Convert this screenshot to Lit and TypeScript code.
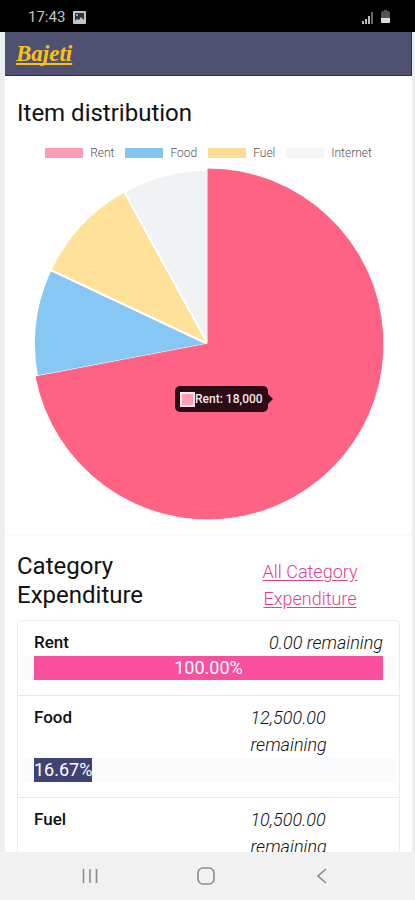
import { LitElement, html, css, svg, nothing } from "lit";
import { customElement } from "lit/decorators.js";

interface Slice {
  label: string;
  value: number;
  fill: string;
  swatch: string;
  active?: boolean;
}

interface Category {
  name: string;
  remaining: string;
  percent?: number;
  full?: boolean;
}

const SLICES: Slice[] = [
  { label: "Rent", value: 18000, fill: "#ff6384", swatch: "#fb9db5", active: true },
  { label: "Food", value: 2500, fill: "#86c7f3", swatch: "#86c5ef" },
  { label: "Fuel", value: 2500, fill: "#ffe19a", swatch: "#fddd96" },
  { label: "Internet", value: 2000, fill: "#f0f2f3", swatch: "#f3f5f6" },
];

const CATEGORIES: Category[] = [
  { name: "Rent", remaining: "0.00", percent: 100, full: true },
  { name: "Food", remaining: "12,500.00", percent: 16.67 },
  { name: "Fuel", remaining: "10,500.00" },
];

@customElement("distribution-pie")
class DistributionPie extends LitElement {
  static styles = css`
    :host { display: block; }
    .legend {
      display: flex;
      justify-content: center;
      gap: 11px;
      margin: 0;
      padding: 0;
      list-style: none;
      font-size: 12px;
      line-height: 16px;
      font-weight: 300;
      color: #555;
    }
    .key { display: flex; align-items: center; gap: 7px; }
    .swatch { width: 38px; height: 10px; }
    .chart { position: relative; margin-top: 7px; }
    .pie { display: block; width: 100%; }
    .tip {
      position: absolute;
      left: 41%;
      top: 62%;
      display: flex;
      align-items: center;
      height: 26px;
      margin-left: 1px;
      padding: 0 5px;
      border-radius: 5px;
      background: #2c0b15;
      color: #f3e8eb;
      font-size: 12px;
      font-weight: 500;
      white-space: nowrap;
    }
    .tip::after {
      content: "";
      position: absolute;
      left: 100%;
      top: 8px;
      border: 5px solid transparent;
      border-left-color: #2c0b15;
      border-right-width: 0;
    }
    .dot {
      box-sizing: border-box;
      width: 15px;
      height: 15px;
      border: 2px solid #f3e8eb;
      background: #ff9db5;
    }
  `;

  private slices() {
    const total = SLICES.reduce((sum, s) => sum + s.value, 0);
    let start = 0;
    return SLICES.map((s) => {
      const end = start + (s.value / total) * Math.PI * 2;
      const r = s.active ? 175 : 174;
      const at = (a: number) => `${191 + r * Math.sin(a)} ${176 - r * Math.cos(a)}`;
      const large = end - start > Math.PI ? 1 : 0;
      const d = `M191 176L${at(start)}A${r} ${r} 0 ${large} 1 ${at(end)}Z`;
      start = end;
      return { d, slice: s };
    });
  }

  render() {
    // The active slice is drawn last so that its outline covers its neighbours' borders.
    const ordered = this.slices().sort((a, b) => Number(!!a.slice.active) - Number(!!b.slice.active));
    return html`
      <ul class="legend">
        ${SLICES.map(
          (s) => html`<li class="key"><span class="swatch" style="background:${s.swatch}"></span>${s.label}</li>`
        )}
      </ul>
      <div class="chart">
        <svg class="pie" viewBox="0 0 383 352" role="img" aria-label="Item distribution">
          ${ordered.map(
            ({ d, slice }) =>
              svg`<path d=${d} fill=${slice.fill} stroke=${slice.active ? slice.fill : "#fff"} stroke-width=${slice.active ? 1 : 2} />`
          )}
        </svg>
        <div class="tip"><span class="dot"></span>Rent: 18,000</div>
      </div>
    `;
  }
}

@customElement("category-list")
class CategoryList extends LitElement {
  static styles = css`
    :host { display: block; }
    .list {
      margin: 0;
      padding: 0;
      list-style: none;
      border: 1px solid #ececee;
      border-radius: 5px;
    }
    .item { padding: 8px 16px 15px; }
    .item + .item { border-top: 1px solid #e6e8e9; }
    .line { display: flex; justify-content: space-between; line-height: 27px; }
    .name { font-size: 17px; font-weight: 500; color: #111; }
    .left { max-width: 38%; font-weight: 300; font-style: italic; color: #111; }
    .track { margin: 0 -12px; padding: 0 12px; background: #f8fafb; }
    .bar {
      height: 24px;
      line-height: 24px;
      background: #3f4373;
      color: #fff;
      text-align: center;
    }
    .full { background: #f94f9f; }
  `;

  private track(c: Category) {
    if (c.percent === undefined) return nothing;
    return html`
      <div class="track">
        <div class="bar ${c.full ? "full" : ""}" style="width:${c.percent}%">${c.percent.toFixed(2)}%</div>
      </div>
    `;
  }

  render() {
    return html`
      <ul class="list">
        ${CATEGORIES.map(
          (c) => html`
            <li class="item">
              <div class="line">
                <span class="name">${c.name}</span>
                <em class="left">${c.remaining} remaining</em>
              </div>
              ${this.track(c)}
            </li>
          `
        )}
      </ul>
    `;
  }
}

@customElement("app-root")
class AppRoot extends LitElement {
  static styles = css`
    :host {
      display: flex;
      flex-direction: column;
      height: 100vh;
      overflow: hidden;
      background: #eceff0;
      font-family: Roboto, "Noto Sans", sans-serif;
      font-size: 18px;
      color: #111;
    }
    .status {
      flex: none;
      display: flex;
      align-items: center;
      height: 32px;
      box-sizing: border-box;
      padding: 2px 25px 0 28px;
      gap: 8px;
      background: #000;
      color: #c4c4c4;
      font-size: 15px;
    }
    .photo { width: 13px; height: 13px; margin-right: auto; }
    .signal { width: 11px; height: 13px; }
    .battery { width: 9px; height: 14px; }
    .page {
      flex: 1;
      min-height: 0;
      overflow-y: auto;
      scrollbar-width: none;
      margin: 0 3px 0 5px;
      background: #fff;
    }
    .top {
      display: flex;
      align-items: center;
      height: 44px;
      box-sizing: border-box;
      padding: 0 11px;
      background: #4e5270;
      border-bottom: 1px solid #28296a;
      border-right: 1px solid #28296a;
    }
    .brand {
      color: #fbc30f;
      font-family: "Liberation Serif", serif;
      font-size: 23px;
      line-height: 28px;
      font-weight: 700;
      font-style: italic;
      text-decoration: underline;
      text-decoration-thickness: 2px;
      text-underline-offset: 2px;
      text-decoration-skip-ink: none;
    }
    .panel { padding: 23px 12px 14px; border-bottom: 2px solid #fafafa; }
    .spend { padding: 16px 12px; }
    .title { margin: 0; font-size: 24px; line-height: 29px; font-weight: 400; }
    .pie { margin-top: 17px; }
    .head { display: flex; justify-content: space-between; margin-bottom: 8px; }
    .side {
      width: 47%;
      padding-top: 6px;
      line-height: 27px;
      font-weight: 300;
      text-align: center;
    }
    .more { color: #e83e8c; text-underline-offset: 2px; }
    .nav {
      flex: none;
      display: flex;
      align-items: center;
      justify-content: space-around;
      height: 48px;
      padding: 0 35px 0 32px;
      background: #f1f1f1;
    }
    .key { display: flex; padding: 8px; border: 0; background: none; }
    .glyph { width: 20px; height: 20px; fill: none; stroke: #8b8b8b; stroke-width: 1.6; }
  `;

  render() {
    return html`
      <div class="status">
        <span>17:43</span>
        <svg class="photo" viewBox="0 0 13 13">
          <rect width="13" height="13" rx="1" fill="#c4c4c4" />
          <path d="M2 2h9v7L8 6 6 9 4 8 2 10z" fill="#333" />
          <circle cx="4" cy="4" r="1" fill="#c4c4c4" />
        </svg>
        <svg class="signal" viewBox="0 0 11 13">
          <path d="M0 10h2v3H0zM3 8h2v5H3zM6 5h2v8H6z" fill="#bbb" />
          <path d="M9 1h2v12H9z" fill="#666" />
        </svg>
        <svg class="battery" viewBox="0 0 9 14">
          <path d="M0 3a2 2 0 0 1 2-2h1V0h3v1h1a2 2 0 0 1 2 2v5H0z" fill="#555" />
          <path d="M0 8h9v4a1 1 0 0 1-1 1H1a1 1 0 0 1-1-1z" fill="#ddd" />
        </svg>
      </div>

      <div class="page">
        <header class="top"><a class="brand" href="#">Bajeti</a></header>
        <section class="panel">
          <h2 class="title">Item distribution</h2>
          <distribution-pie class="pie"></distribution-pie>
        </section>
        <section class="spend">
          <div class="head">
            <h2 class="title">Category<br />Expenditure</h2>
            <div class="side"><a class="more" href="#">All Category Expenditure</a></div>
          </div>
          <category-list></category-list>
        </section>
      </div>

      <nav class="nav">
        <button class="key" aria-label="Recent apps">
          <svg class="glyph" viewBox="0 0 20 20"><path d="M3.5 3v14M10 3v14M16.5 3v14" /></svg>
        </button>
        <button class="key" aria-label="Home">
          <svg class="glyph" viewBox="0 0 20 20"><rect x="2" y="2" width="16" height="16" rx="5" /></svg>
        </button>
        <button class="key" aria-label="Back">
          <svg class="glyph" viewBox="0 0 20 20"><path d="M14 3l-8 7 8 7" /></svg>
        </button>
      </nav>
    `;
  }
}
